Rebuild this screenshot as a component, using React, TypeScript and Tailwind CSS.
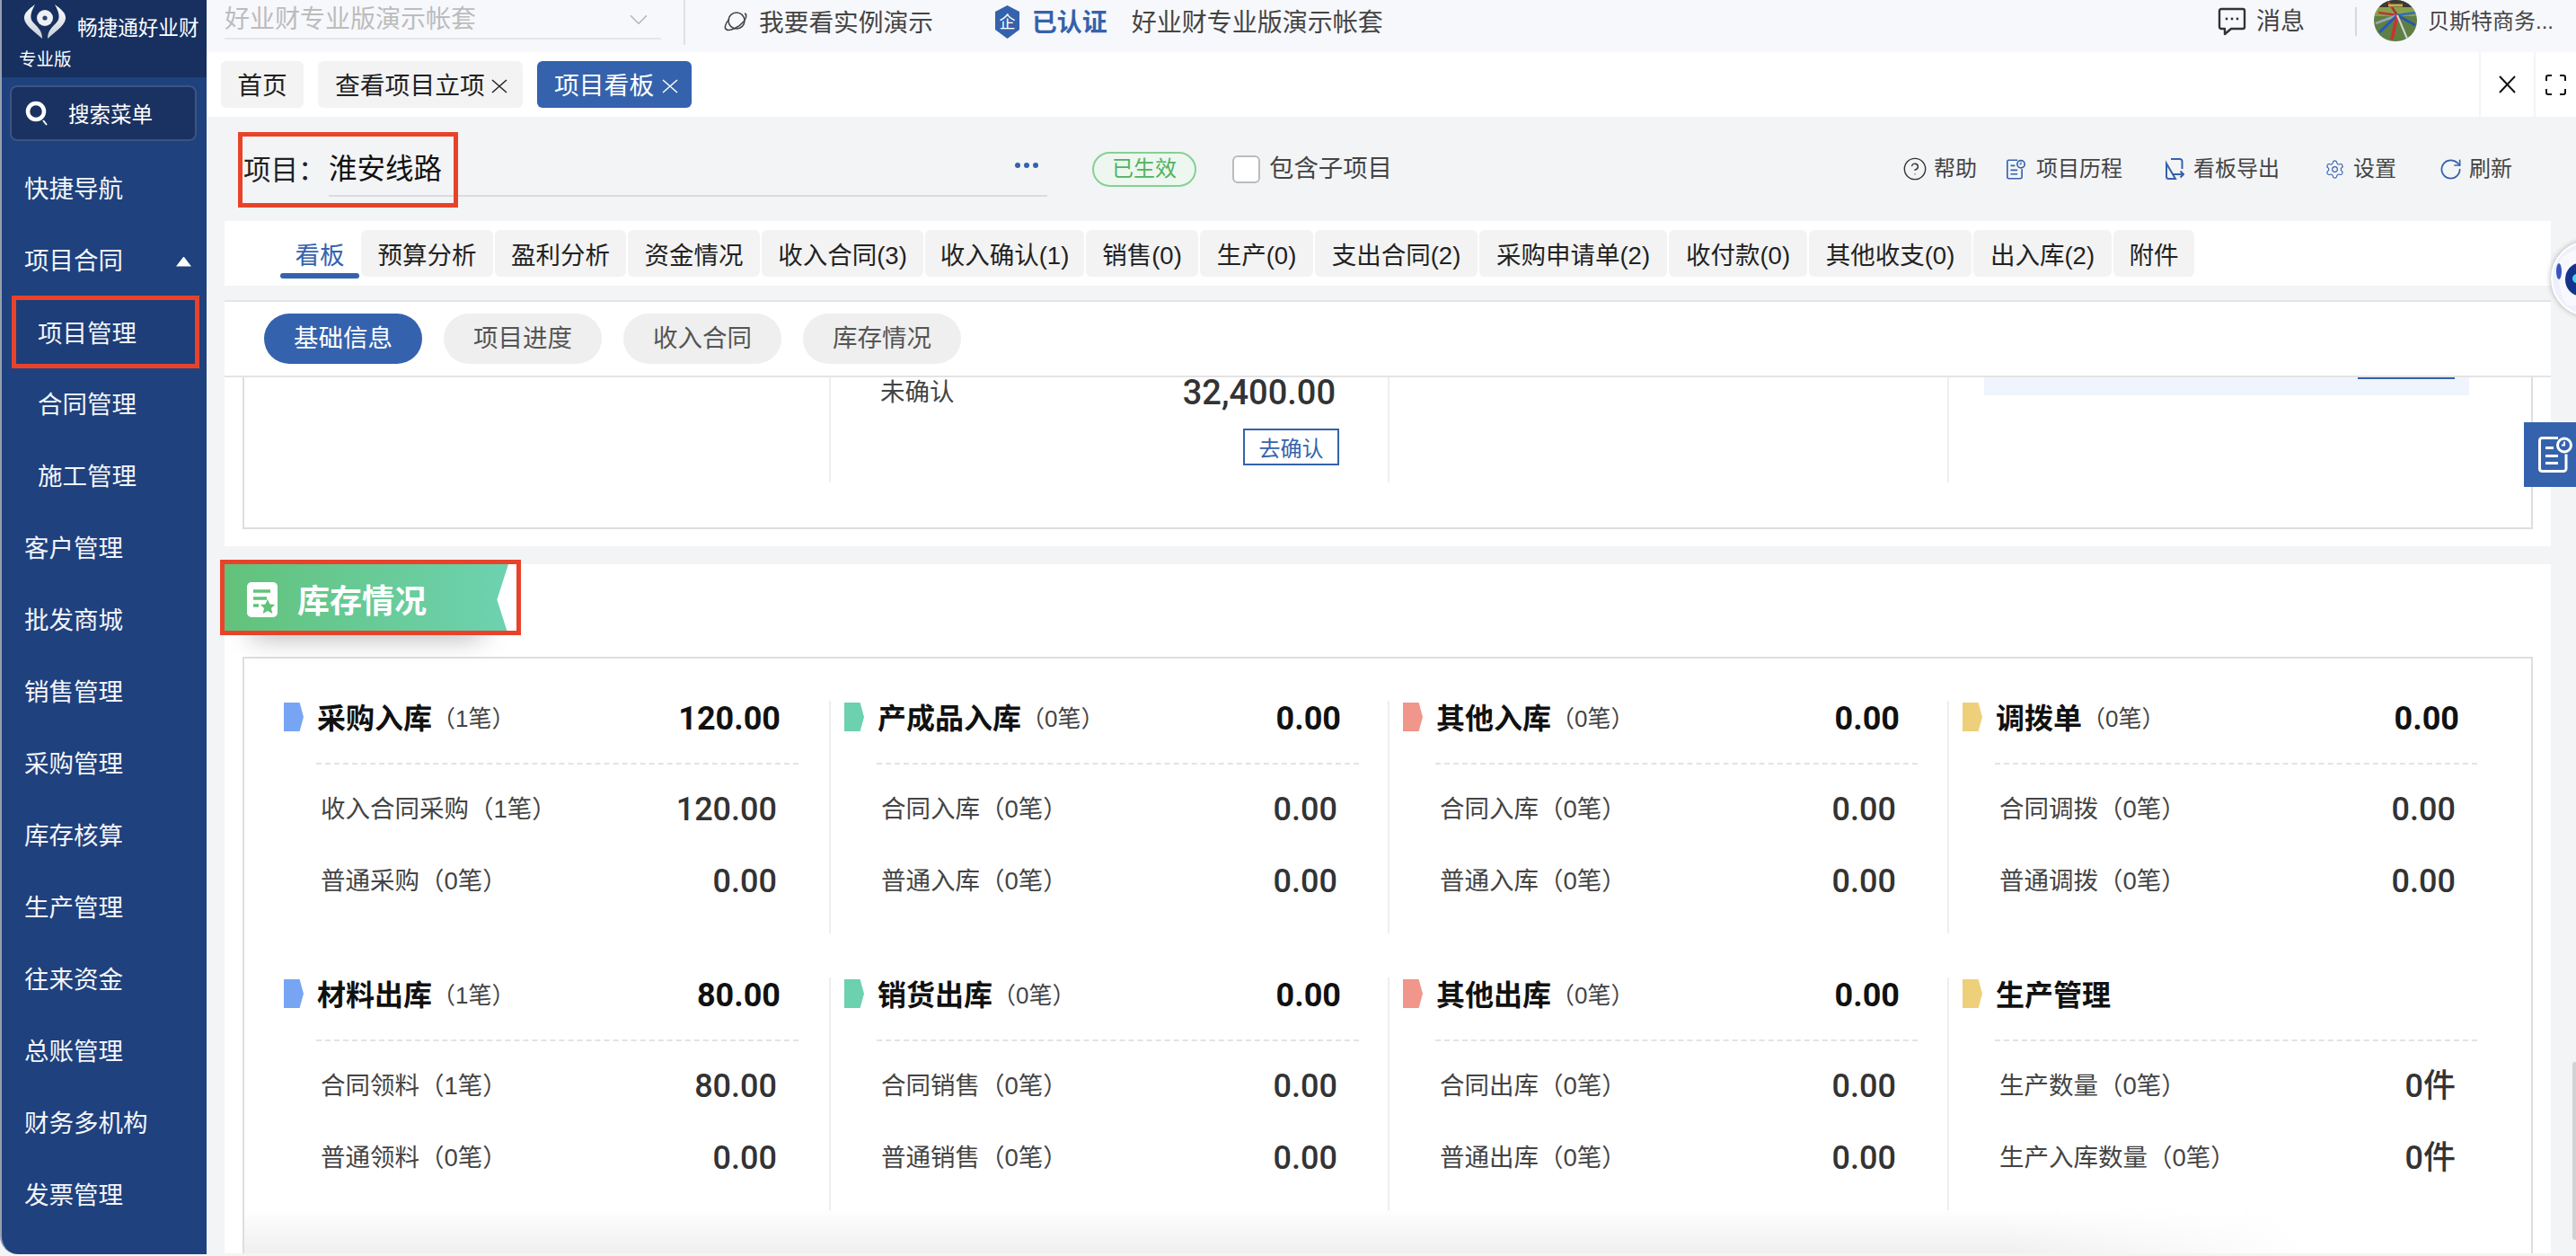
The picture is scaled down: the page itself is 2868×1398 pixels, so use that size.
import React from 'react'
import { ChevronDown, CircleHelp, RotateCw, Settings } from 'lucide-react'

const blueBrand = '#3562ad'

const menus = ['客户管理', '批发商城', '销售管理', '采购管理', '库存核算', '生产管理', '往来资金', '总账管理', '财务多机构', '发票管理', '微信管理']

const tabs = [
  { label: '预算分析', w: 'w-[147px]' },
  { label: '盈利分析', w: 'w-[146px]' },
  { label: '资金情况', w: 'w-[147px]' },
  { label: '收入合同(3)', w: 'w-[180px]' },
  { label: '收入确认(1)', w: 'w-[177px]' },
  { label: '销售(0)', w: 'w-[125px]' },
  { label: '生产(0)', w: 'w-[126px]' },
  { label: '支出合同(2)', w: 'w-[181px]' },
  { label: '采购申请单(2)', w: 'w-[209px]' },
  { label: '收付款(0)', w: 'w-[154px]' },
  { label: '其他收支(0)', w: 'w-[181px]' },
  { label: '出入库(2)', w: 'w-[154px]' },
  { label: '附件', w: 'w-[90px]' },
]

const pills = ['项目进度', '收入合同', '库存情况']

type StockCol = {
  color: string
  title: string
  count?: string
  value?: string
  rows: [string, string][]
}

const topCols: StockCol[] = [
  { color: 'bg-[#78a5f3]', title: '采购入库', count: '（1笔）', value: '120.00', rows: [['收入合同采购（1笔）', '120.00'], ['普通采购（0笔）', '0.00']] },
  { color: 'bg-[#6cd1ae]', title: '产成品入库', count: '（0笔）', value: '0.00', rows: [['合同入库（0笔）', '0.00'], ['普通入库（0笔）', '0.00']] },
  { color: 'bg-[#f0968a]', title: '其他入库', count: '（0笔）', value: '0.00', rows: [['合同入库（0笔）', '0.00'], ['普通入库（0笔）', '0.00']] },
  { color: 'bg-[#eecf7a]', title: '调拨单', count: '（0笔）', value: '0.00', rows: [['合同调拨（0笔）', '0.00'], ['普通调拨（0笔）', '0.00']] },
]

const bottomCols: StockCol[] = [
  { color: 'bg-[#78a5f3]', title: '材料出库', count: '（1笔）', value: '80.00', rows: [['合同领料（1笔）', '80.00'], ['普通领料（0笔）', '0.00']] },
  { color: 'bg-[#6cd1ae]', title: '销货出库', count: '（0笔）', value: '0.00', rows: [['合同销售（0笔）', '0.00'], ['普通销售（0笔）', '0.00']] },
  { color: 'bg-[#f0968a]', title: '其他出库', count: '（0笔）', value: '0.00', rows: [['合同出库（0笔）', '0.00'], ['普通出库（0笔）', '0.00']] },
  { color: 'bg-[#eecf7a]', title: '生产管理', rows: [['生产数量（0笔）', '0件'], ['生产入库数量（0笔）', '0件']] },
]

const Logo = () => (
  <svg width="70" height="50" viewBox="0 0 70 50">
    <defs>
      <linearGradient id="wing" x1="0" y1="0" x2="0" y2="1">
        <stop offset="0" stopColor="#ffffff" />
        <stop offset="1" stopColor="#c9ced8" />
      </linearGradient>
    </defs>
    <path d="M29 5 C22 10 16 15 17 21 C18 29 31 37 37 43 C37 35 33 31 27 25 C22 20 25 12 29 5 Z" fill="url(#wing)" />
    <path d="M51 5 C58 10 64 15 63 21 C62 29 49 37 43 43 C43 35 47 31 53 25 C58 20 55 12 51 5 Z" fill="url(#wing)" />
    <circle cx="40" cy="20" r="9" fill="#eef0f4" />
    <circle cx="40" cy="20" r="2.6" fill="#2a4374" />
  </svg>
)

const Sidebar = () => (
  <aside className="w-[230px] h-[1396px] shrink-0 bg-[#1f417e] border-l-2 border-[#97a0ae] rounded-bl-[20px] overflow-hidden text-[27.5px] text-[#f3f5f9]">
    <div className="h-[86px] -ml-[2px] bg-[#17305f] text-white">
      <div className="flex h-[50px] items-start pl-[10px]">
        <Logo />
        <span className="ml-[6px] pt-[20px] text-[22.6px] leading-[24px] whitespace-nowrap">畅捷通好业财</span>
      </div>
      <div className="pl-[21px] pt-[4px] h-[30px] flex items-center text-[19.5px]">专业版</div>
    </div>
    <div className="ml-[9px] mt-[9px] w-[208px] h-[62px] rounded-[8px] border-2 border-[#3c5482] bg-[#193261] flex items-center pl-[15px] text-[23.5px] text-white">
      <svg width="26" height="30" viewBox="0 0 26 30" fill="none">
        <circle cx="12" cy="13" r="9" stroke="#fff" strokeWidth="4.5" />
        <path d="M20 23 L24 28" stroke="#fff" strokeWidth="2" />
      </svg>
      <span className="ml-[22px] pt-[6px]">搜索菜单</span>
    </div>
    <div className="mt-[12px] h-[80px] pt-[4px] flex items-center pl-[25px]">快捷导航</div>
    <div className="h-[80px] pt-[4px] flex items-center justify-between pl-[25px] pr-[17px]">
      <span>项目合同</span>
      <span className="w-[17px] h-[11px] bg-white [clip-path:polygon(50%_0,100%_100%,0_100%)]" />
    </div>
    <div className="ml-[11px] w-[209px] h-[81px] -mb-[1px] pt-[4px] border-[5px] border-[#e8432a] bg-[#1d3e78] flex items-center pl-[24px]">项目管理</div>
    <div className="h-[80px] pt-[4px] flex items-center pl-[40px]">合同管理</div>
    <div className="h-[80px] pt-[4px] flex items-center pl-[40px]">施工管理</div>
    {menus.map((m) => (
      <div key={m} className="h-[80px] pt-[4px] flex items-center pl-[25px]">{m}</div>
    ))}
  </aside>
)

const Avatar = () => (
  <svg width="48" height="46" viewBox="0 0 48 46">
    <rect width="48" height="46" fill="#5f7f45" />
    <rect width="48" height="8" fill="#3d3a34" />
    <rect y="8" width="48" height="10" fill="#8aa04c" />
    <path d="M26 17 L5 14" stroke="#b03a3a" strokeWidth="2.5" />
    <path d="M26 17 L16 2" stroke="#a33" strokeWidth="2.5" />
    <path d="M26 17 L46 14" stroke="#2f6fb5" strokeWidth="2.5" />
    <path d="M26 17 L46 28" stroke="#2458ad" strokeWidth="3" />
    <path d="M26 17 L2 26" stroke="#9aa7b5" strokeWidth="2.5" />
    <path d="M26 17 L6 36" stroke="#2458c0" strokeWidth="3" />
    <path d="M26 17 L20 44" stroke="#c8342f" strokeWidth="3.5" />
    <path d="M26 17 L37 43" stroke="#d6d6d6" strokeWidth="2" />
    <path d="M16 6 L32 6" stroke="#c4b14a" strokeWidth="3" />
  </svg>
)

const TopBar = () => (
  <div className="h-[58px] bg-[#f7f8fc] flex items-center pb-[10px] pr-[25px] text-[#444]">
    <div className="ml-[20px] w-[486px] h-[44px] self-start border-b-2 border-[#e6e7ea] flex items-center justify-between pr-[8px] pt-[2px] text-[28px] text-[#bcbcbc] whitespace-nowrap">
      <span>好业财专业版演示帐套</span>
      <ChevronDown size={34} strokeWidth={1.1} color="#b5b5b5" />
    </div>
    <div className="ml-[25px] w-[2px] h-[50px] self-start bg-[#e0e0e0]" />
    <svg className="ml-[42px]" width="28" height="28" viewBox="0 0 28 28" fill="none" stroke="#444" strokeWidth="1.5">
      <circle cx="15" cy="13" r="9" />
      <path d="M7 11 C2 17 1 22 4 23 C8 25 18 20 23 14 C26 10 27 6 24 5" />
    </svg>
    <span className="ml-[12px] pt-[4px] text-[27.7px] whitespace-nowrap">我要看实例演示</span>
    <svg className="ml-[69px]" width="27" height="37" viewBox="0 0 27 37">
      <path d="M13.5 0 L27 7 V27 L13.5 37 L0 27 V7 Z" fill={blueBrand} />
      <text x="13.5" y="25" fontSize="18" fill="#fff" textAnchor="middle">企</text>
    </svg>
    <span className="ml-[14px] pt-[4px] text-[28px] font-bold text-[#3562ad] whitespace-nowrap">已认证</span>
    <span className="ml-[27px] pt-[4px] text-[28px] whitespace-nowrap">好业财专业版演示帐套</span>
    <svg className="ml-auto" width="32" height="32" viewBox="0 0 32 32" fill="none" stroke="#333" strokeWidth="2.4">
      <path d="M4 2 H28 A2 2 0 0 1 30 4 V22 A2 2 0 0 1 28 24 H15 L8 30 V24 H4 A2 2 0 0 1 2 22 V4 A2 2 0 0 1 4 2 Z" strokeLinejoin="round" />
      <circle cx="10" cy="13" r="1.4" fill="#333" stroke="none" />
      <circle cx="16" cy="13" r="1.4" fill="#333" stroke="none" />
      <circle cx="22" cy="13" r="1.4" fill="#333" stroke="none" />
    </svg>
    <span className="ml-[11px] text-[27px]">消息</span>
    <div className="ml-[56px] w-[2px] h-[32px] bg-[#d9d9d9]" />
    <div className="ml-[19px] self-start w-[48px] h-[46px] overflow-hidden rounded-full">
      <Avatar />
    </div>
    <span className="ml-[12px] text-[24px] whitespace-nowrap">贝斯特商务...</span>
  </div>
)

const CloseMark = ({ w, h, sw = 1.5 }: { w: number; h: number; sw?: number }) => (
  <svg width={w} height={h} viewBox={`0 0 ${w} ${h}`} stroke="currentColor" strokeWidth={sw}>
    <path d={`M1 1 L${w - 1} ${h - 1} M${w - 1} 1 L1 ${h - 1}`} />
  </svg>
)

const TabStrip = () => (
  <div className="h-[72px] bg-white flex text-[27.8px] text-[#222]">
    <div className="pt-[10px] pl-[16px] flex items-start gap-[16px]">
      <div className="h-[52px] w-[92px] pt-[4px] rounded-[6px] bg-[#f3f3f3] flex items-center justify-center">首页</div>
      <div className="h-[52px] w-[228px] pt-[4px] rounded-[6px] bg-[#f3f3f3] flex items-center pl-[19px]">
        <span>查看项目立项</span>
        <span className="ml-[7px]"><CloseMark w={18} h={16} /></span>
      </div>
      <div className="h-[52px] w-[172px] pt-[4px] rounded-[6px] bg-[#3562ad] flex items-center pl-[19px] text-white">
        <span>项目看板</span>
        <span className="ml-[9px]"><CloseMark w={18} h={16} /></span>
      </div>
    </div>
    <div className="ml-auto flex">
      <div className="w-[61px] border-l-2 border-[#f4f4f4] flex items-center justify-center text-[#111]">
        <CloseMark w={19} h={20} sw={2} />
      </div>
      <div className="w-[47px] border-l-2 border-[#f4f4f4] flex items-center justify-center">
        <svg width="23" height="23" viewBox="0 0 23 23" fill="none" stroke="#111" strokeWidth="2">
          <path d="M1 7 V3 A2 2 0 0 1 3 1 H7 M16 1 H20 A2 2 0 0 1 22 3 V7 M22 16 V20 A2 2 0 0 1 20 22 H16 M7 22 H3 A2 2 0 0 1 1 20 V16" />
        </svg>
      </div>
    </div>
  </div>
)

const HistoryIcon = ({ color = blueBrand, size = 21 }: { color?: string; size?: number }) => (
  <svg width={size} height={Math.round(size * 1.1)} viewBox="0 0 38 41" fill="none" stroke={color} strokeWidth="3">
    <path d="M22 2 H4 A3 3 0 0 0 1.5 5 V36 A3 3 0 0 0 4 39 H28 A3 3 0 0 0 31 36 V20" />
    <path d="M8 13 H17 M8 22 H22 M8 30 H22" />
    <circle cx="29" cy="10" r="7.5" />
    <path d="M29 6 V10 H26" strokeWidth="2" />
  </svg>
)

const ExportIcon = () => (
  <svg width="21" height="24" viewBox="0 0 21 24" fill="none" stroke={blueBrand} strokeWidth="2">
    <path d="M6 1 H16 A2.5 2.5 0 0 1 18.5 3.5 V12 M11 23 H3.5 A2.5 2.5 0 0 1 1 20.5 V6 Z" />
    <path d="M8 18 H20 M16.5 14.5 L20 18 L16.5 21.5" />
  </svg>
)

const ProjectRow = () => (
  <div className="relative h-[116px] flex items-center pl-[41px] pr-[71px] text-[#444]">
    <span className="w-[95px] pt-[4px] text-[30.5px] text-[#222] whitespace-nowrap">项目：</span>
    <div className="w-[800px] h-[62px] border-b-2 border-[#dcdcdc] flex items-center justify-between pr-[10px]">
      <span className="pt-[4px] text-[31.5px] text-[#111]">淮安线路</span>
      <span className="flex gap-[4px] -mt-[6px]">
        <i className="w-[6px] h-[6px] rounded-full bg-[#3562ad]" />
        <i className="w-[6px] h-[6px] rounded-full bg-[#3562ad]" />
        <i className="w-[6px] h-[6px] rounded-full bg-[#3562ad]" />
      </span>
    </div>
    <div className="ml-[50px] w-[116px] h-[39px] rounded-full border-2 border-[#85d095] bg-[#edf7ef] flex items-center justify-center text-[24px] text-[#4fb35f]">已生效</div>
    <div className="ml-[40px] w-[31px] h-[31px] rounded-[6px] border-2 border-[#bbb] bg-white" />
    <span className="ml-[10px] text-[27.4px] whitespace-nowrap">包含子项目</span>

    <div className="ml-auto flex items-center text-[24px] whitespace-nowrap">
      <span className="-mx-[2px]"><CircleHelp size={28} strokeWidth={1.2} color="#333" /></span>
      <span className="ml-[9px]">帮助</span>
      <span className="ml-[33px]"><HistoryIcon /></span>
      <span className="ml-[12px]">项目历程</span>
      <span className="ml-[48px]"><ExportIcon /></span>
      <span className="ml-[10px]">看板导出</span>
      <span className="ml-[50px] -mr-[1px]"><Settings size={23} strokeWidth={1.2} color={blueBrand} /></span>
      <span className="ml-[10px]">设置</span>
      <span className="ml-[47px] -mr-[2px]"><RotateCw size={27} strokeWidth={1.5} color={blueBrand} /></span>
      <span className="ml-[9px]">刷新</span>
    </div>

    {/* 标注框 */}
    <div className="absolute left-[35px] top-[17px] w-[245px] h-[84px] border-[5px] border-[#e8432a]" />
  </div>
)

const BoardTabs = () => (
  <div className="h-[72px] bg-white flex items-start pt-[10px] pl-[62px] gap-[2px] text-[27.5px] text-[#222] whitespace-nowrap">
    <div className="relative w-[88px] h-[54px] flex items-start justify-center pt-[8px] text-[#3562ad]">
      看板
      <i className="absolute left-0 bottom-0 w-full h-[6px] rounded-[3px] bg-[#3562ad]" />
    </div>
    {tabs.map((t) => (
      <div key={t.label} className={`h-[52px] pt-[6px] rounded-[6px] bg-[#f3f3f3] flex items-center justify-center ${t.w}`}>{t.label}</div>
    ))}
  </div>
)

const Pills = () => (
  <div className="h-[86px] bg-white border-t-2 border-b-2 border-[#e4e4e4] flex items-start pt-[13px] pl-[44px] gap-[24px] text-[27.5px]">
    <div className="w-[176px] h-[56px] rounded-full bg-[#3562ad] text-white flex items-center justify-center">基础信息</div>
    {pills.map((p) => (
      <div key={p} className="w-[176px] h-[56px] rounded-full bg-[#efefef] text-[#555] flex items-center justify-center">{p}</div>
    ))}
  </div>
)

const ClippedPanel = () => (
  <div className="h-[188px] bg-white">
    <div className="mx-[20px] w-[2550px] h-[169px] border-x-2 border-b-2 border-[#dedede] pl-[27px] grid grid-cols-[624px_622px_623px_623px] items-start">
      <div className="h-[117px]" />
      <div className="h-[117px] border-l-2 border-[#eee] pl-[55px]">
        <div className="w-[507px] h-[30px] pt-[4px] flex items-center justify-between text-[27.5px] text-[#444]">
          <span>未确认</span>
          <span className="font-['Roboto'] font-medium text-[38px] text-[#333]">32,400.00</span>
        </div>
        <div className="ml-[404px] mt-[27px] w-[107px] h-[41px] pt-[4px] border-2 border-[#3562ad] flex items-center justify-center text-[24px] text-[#3562ad]">去确认</div>
      </div>
      <div className="h-[117px] border-l-2 border-[#eee]" />
      <div className="h-[117px] border-l-2 border-[#eee] pl-[39px]">
        <div className="w-[540px] h-[20px] bg-[#f0f4fc]">
          <div className="ml-[416px] w-[108px] h-[2px] bg-[#3562ad]" />
        </div>
      </div>
    </div>
  </div>
)

const StockColumn = ({ col, first }: { col: StockCol; first: boolean }) => (
  <div className={first ? 'h-[259px] border-l-2 border-transparent' : 'h-[259px] border-l-2 border-[#eee]'}>
    <div className="w-[568px] h-[36px] pl-[15px] flex items-center whitespace-nowrap">
      <i className={`w-[22px] h-[32px] [clip-path:polygon(0_0,80%_0,100%_50%,80%_100%,0_100%)] ${col.color}`} />
      <span className="ml-[15px] pt-[4px] text-[32px] font-bold text-[#111]">{col.title}</span>
      {col.count && <span className="pt-[4px] text-[26px] text-[#444]">{col.count}</span>}
      {col.value && <span className="ml-auto pt-[4px] font-['Roboto'] font-bold text-[36px] text-[#111]">{col.value}</span>}
    </div>
    <div className="ml-[51px] w-[537px] mt-[33px] border-t-2 border-dashed border-[#e3e3e3]" />
    <div className="mt-[8px]">
      {col.rows.map(([label, value]) => (
        <div key={label} className="w-[564px] h-[80px] pl-[56px] pt-[4px] flex items-center justify-between whitespace-nowrap">
          <span className="text-[27.5px] text-[#444]">{label}</span>
          <span className="font-['Roboto','Noto_Sans_CJK_SC'] font-medium text-[36px] text-[#333]">{value}</span>
        </div>
      ))}
    </div>
  </div>
)

const StockPanel = () => (
  <div className="relative mt-[20px] h-[767px] bg-white">
    <div className="relative w-[316px] h-[79px] shadow-[0_30px_30px_-30px_rgba(0,0,0,0.4)]">
      <div className="h-full pl-[25px] flex items-center bg-linear-to-r from-[#62c27a] to-[#6dd2b0] [clip-path:polygon(0_0,100%_0,96%_50%,100%_100%,0_100%)]">
        <svg width="34" height="39" viewBox="0 0 34 39">
          <rect width="34" height="39" rx="5" fill="#fff" />
          <path d="M7 10 H26 M7 18 H22 M7 26 H13" stroke="#62c27a" strokeWidth="3.4" />
          <path d="M23 19 L25.5 24.5 L31 25 L27 29 L28.3 35 L23 32 L17.7 35 L19 29 L15 25 L20.5 24.5 Z" fill="#62c27a" />
        </svg>
        <span className="ml-[22px] pt-[4px] text-[36px] font-bold text-white">库存情况</span>
      </div>
      {/* 标注框 */}
      <div className="absolute -left-[5px] -top-[5px] w-[335px] h-[84px] border-[5px] border-[#e8432a]" />
    </div>
    <div className="mx-[20px] mt-[24px] w-[2550px] h-[664px] border-x-2 border-t-2 border-[#dedede] pt-[47px] pl-[27px]">
      <div className="grid grid-cols-[624px_622px_623px_623px] gap-y-[49px]">
        {[...topCols, ...bottomCols].map((col, i) => (
          <StockColumn key={col.title} col={col} first={i % 4 === 0} />
        ))}
      </div>
    </div>
    <div className="absolute left-[22px] bottom-0 w-[2300px] h-[50px] bg-linear-to-b from-transparent to-[#efefef] [mask-image:linear-gradient(to_right,#000_85%,transparent)]" />
  </div>
)

const Robot = () => (
  <div className="absolute left-[2840px] top-[268px] w-[84px] h-[84px] rounded-full bg-[#eef1fb] border-2 border-white shadow-[0_0_6px_rgba(0,0,0,0.3)] overflow-hidden">
    <svg width="80" height="80" viewBox="0 0 80 80">
      <path d="M8 20 C14 10 30 6 40 8 V70 H16 C8 60 4 34 8 20 Z" fill="#f8f9ff" />
      <ellipse cx="7" cy="32" rx="3" ry="9" fill="#3a55c0" />
      <ellipse cx="30" cy="41" rx="16" ry="18" fill="#14348c" />
      <circle cx="27" cy="40" r="5" fill="#4fd3f5" />
    </svg>
  </div>
)

export default function App() {
  return (
    <div className="relative w-[2868px] h-[1398px] flex overflow-hidden bg-[#f3f4f6] [font-family:'Liberation_Sans','Noto_Sans_CJK_SC',sans-serif]">
      <Sidebar />
      <main className="w-[2638px] flex flex-col">
        <TopBar />
        <TabStrip />
        <ProjectRow />
        <div className="ml-[20px] w-[2590px]">
          <BoardTabs />
          <div className="h-[16px]" />
          <Pills />
          <ClippedPanel />
          <StockPanel />
        </div>
      </main>

      <Robot />
      <div className="absolute left-[2810px] top-[470px] w-[58px] h-[72px] bg-[#3562ad] flex items-center justify-end pr-[4px]">
        <HistoryIcon color="#fff" size={38} />
      </div>
      <div className="absolute right-0 top-[1182px] w-[4px] h-[198px] rounded-l-[3px] bg-[#d2d2d2]" />
    </div>
  )
}
